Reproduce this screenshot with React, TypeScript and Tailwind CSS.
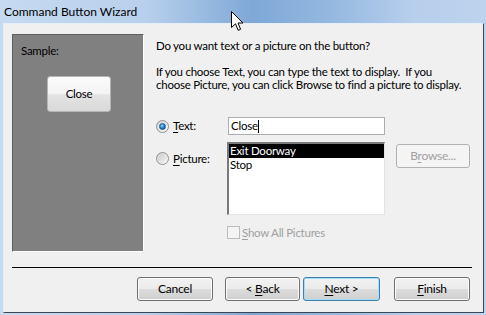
import React from "react";

const font = { fontFamily: 'Lato, "Noto Sans", sans-serif' };

function Btn({
  children,
  w = "w-[76px]",
  focus = false,
  disabled = false,
}: {
  children: React.ReactNode;
  w?: string;
  focus?: boolean;
  disabled?: boolean;
}) {
  const border = focus
    ? "border-[#3c7fb1] shadow-[inset_0_0_0_1px_#a5dcf6]"
    : disabled
    ? "border-[#adb2b5]"
    : "border-[#707070] shadow-[inset_0_0_0_1px_#fbfbfb]";
  const bg = disabled
    ? "bg-[#f4f4f4]"
    : "bg-[linear-gradient(180deg,#f2f2f2_0%,#ebebeb_50%,#dddddd_50%,#cfcfcf_100%)]";
  return (
    <div
      className={`${w} h-[24px] border rounded-[3px] flex items-center justify-center text-[12px] leading-none whitespace-nowrap ${border} ${bg} ${
        disabled ? "text-[#a0a0a0]" : "text-black"
      }`}
    >
      {children}
    </div>
  );
}

function U({ children }: { children: React.ReactNode }) {
  return <span className="underline underline-offset-[2px]">{children}</span>;
}

function Radio({ checked }: { checked: boolean }) {
  return (
    <div className="w-[13px] h-[13px] rounded-full border border-[#8e8f8f] bg-[linear-gradient(135deg,#d4d4d4,#fbfbfb)] flex items-center justify-center shrink-0">
      {checked ? (
        <div className="w-[7px] h-[7px] rounded-full bg-[radial-gradient(circle_at_40%_35%,#8ad6ff,#1a71b5_60%,#0d4f87)] border border-[#1c5a8c]" />
      ) : (
        <div className="w-[9px] h-[9px] rounded-full bg-[linear-gradient(135deg,#cbcbcb,#f4f4f4)]" />
      )}
    </div>
  );
}

export default function App() {
  return (
    <div
      className="relative w-[486px] h-[315px] overflow-hidden bg-[linear-gradient(90deg,#c6daf1_0%,#b8d0ec_30%,#7fa8d7_52%,#94b8e0_68%,#b7cfec_85%,#bdd3ee_100%)]"
      style={font}
    >
      {/* title bar */}
      <div className="h-[23px] pl-[4px] flex items-center text-[12px] text-black">
        Command Button Wizard
      </div>

      {/* client area */}
      <div className="ml-[3px] w-[481px] h-[290px] border-l border-t border-[#e6eef8] border-r-[#3c4653] border-b-[#3c4653] border-r border-b bg-[#f0f0f0] text-[11.5px] tracking-[-0.25px] text-black">
        <div className="pl-[8px] pt-[10px]">
          <div className="flex h-[218px]">
            {/* sample panel */}
            <div className="w-[132px] h-[218px] shrink-0 bg-[#808080] border-t border-l border-[#5e5e5e] border-r-white border-b-white border-r border-b pt-[8px] pl-[8px]">
              <div className="leading-[15px]">Sample:</div>
              <div className="ml-[26px] mt-[18px] w-[64px] h-[36px] rounded-[3px] border border-[#b5b5b5] bg-[linear-gradient(180deg,#fbfbfb_0%,#f3f3f3_50%,#e4e4e4_52%,#d9d9d9_100%)] flex items-center justify-center">
                Close
              </div>
            </div>

            {/* right column */}
            <div className="ml-[12px] flex flex-col whitespace-nowrap">
              <div className="mt-[4px] leading-[15px]">
                Do you want text or a picture on the button?
              </div>
              <div className="mt-[12px]">
                <div className="leading-[13px]">
                  If you choose Text, you can type the text to display.&nbsp; If you
                </div>
                <div className="leading-[13px]">
                  choose Picture, you can click Browse to find a picture to display.
                </div>
              </div>

              {/* text row */}
              <div className="mt-[26px] flex items-center h-[18px]">
                <div className="w-[72px] flex items-center gap-[4px]">
                  <Radio checked />
                  <span>
                    <U>T</U>ext:
                  </span>
                </div>
                <div className="w-[157px] h-[18px] border border-[#abadb3] bg-white flex items-center pl-[2px]">
                  <span>Close</span>
                  <span className="w-px h-[13px] bg-black" />
                </div>
              </div>

              {/* picture row */}
              <div className="mt-[7px] flex items-start">
                <div className="w-[71px] flex items-center gap-[4px] mt-[8px]">
                  <Radio checked={false} />
                  <span>
                    <U>P</U>icture:
                  </span>
                </div>
                <div className="w-[158px] h-[73px] bg-white border-t-2 border-l-2 border-t-[#7a7a7a] border-l-[#7a7a7a] border-r border-b border-r-[#e3e3e3] border-b-[#e3e3e3] leading-[14px]">
                  <div className="bg-black text-white pl-[1px] h-[14px]">
                    Exit Doorway
                  </div>
                  <div className="pl-[1px]">Stop</div>
                </div>
                <div className="ml-[11px] mt-[2px]">
                  <Btn w="w-[74px]" disabled>
                    <span>
                      B<U>r</U>owse...
                    </span>
                  </Btn>
                </div>
              </div>

              {/* checkbox row */}
              <div className="mt-[9px] ml-[71px] flex items-center gap-[2px] text-[#a0a0a0]">
                <div className="w-[13px] h-[13px] border border-[#bcbcbc] bg-[#f4f4f4]" />
                <span>
                  <U>S</U>how All Pictures
                </span>
              </div>
            </div>
          </div>

          {/* separator */}
          <div className="mt-[15px] w-[460px] h-px bg-black" />

          {/* buttons */}
          <div className="mt-[9px] flex pl-[125px]">
            <Btn>Cancel</Btn>
            <div className="ml-[12px]">
              <Btn w="w-[75px]">
                <span>
                  &lt; <U>B</U>ack
                </span>
              </Btn>
            </div>
            <div className="ml-[3px]">
              <Btn w="w-[77px]" focus>
                <span>
                  <U>N</U>ext &gt;
                </span>
              </Btn>
            </div>
            <div className="ml-[14px]">
              <Btn>
                <span>
                  <U>F</U>inish
                </span>
              </Btn>
            </div>
          </div>
        </div>
      </div>

      {/* mouse cursor */}
      <svg
        className="absolute left-[231px] top-[11px]"
        width="13"
        height="21"
        viewBox="0 0 13 21"
      >
        <path
          d="M0.5 0.5 L0.5 16.5 L4.5 12.8 L7.2 19.3 L9.6 18.3 L7 12 L12 12 Z"
          fill="white"
          stroke="black"
          strokeWidth="1"
          strokeLinejoin="round"
        />
      </svg>
    </div>
  );
}
